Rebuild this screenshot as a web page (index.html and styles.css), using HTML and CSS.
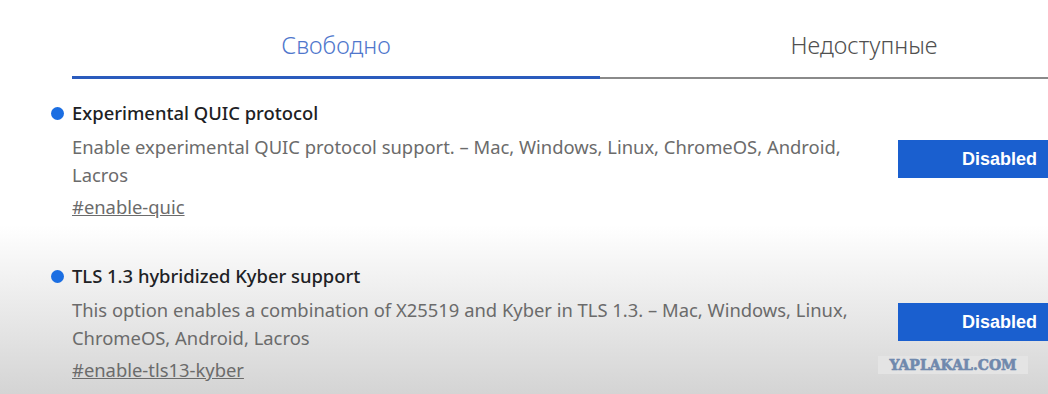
FILE: index.html
```html
<!DOCTYPE html>
<html lang="en">

<head>
    <meta charset="UTF-8">
    <meta name="viewport" content="width=device-width, initial-scale=1.0">
    <title>flags</title>
    <link rel="stylesheet" href="styles.css">
</head>

<body>
    <div class="page">
        <div class="tabs">
            <div class="tab active">Свободно</div>
            <div class="tab">Недоступные</div>
        </div>
        <div class="list">
            <div class="item">
                <span class="dot"></span>
                <div class="info">
                    <div class="title">Experimental QUIC protocol</div>
                    <div class="desc">Enable experimental QUIC protocol support. – Mac, Windows, Linux, ChromeOS, Android, Lacros</div>
                    <a class="link" href="#">#enable-quic</a>
                </div>
                <button class="sel">Disabled</button>
            </div>
            <div class="item">
                <span class="dot"></span>
                <div class="info">
                    <div class="title">TLS 1.3 hybridized Kyber support</div>
                    <div class="desc">This option enables a combination of X25519 and Kyber in TLS 1.3. – Mac, Windows, Linux, ChromeOS, Android, Lacros</div>
                    <a class="link" href="#">#enable-tls13-kyber</a>
                </div>
                <button class="sel">Disabled</button>
            </div>
        </div>
    </div>
    <div class="mark">YAPLAKAL.COM</div>
</body>

</html>
```

FILE: styles.css
```css
*{
    margin: 0;
    padding: 0;
    box-sizing: border-box;
}
html, body{
    height: 100%;
    overflow: hidden;
}
body{
    position: relative;
    font-family: "Noto Sans", "Open Sans", sans-serif;
    background: linear-gradient(to bottom, #ffffff 0px, #ffffff 225px, #d4d4d4 394px);
}
.page{
    width: 1048px;
    padding-left: 51px;
    overflow: hidden;
}
.tabs{
    display: flex;
    margin-left: 21px;
}
.tab{
    width: 528px;
    flex-shrink: 0;
    text-align: center;
    font-size: 23.5px;
    font-weight: 300;
    line-height: 30px;
    padding-top: 30px;
    height: 79px;
    color: #505050;
    border-bottom: 2px solid #8a8a8a;
}
.tab.active{
    color: #5077cc;
    border-bottom: 3px solid #2a5bbd;
}
.list{
    padding-top: 20px;
}
.item{
    display: flex;
    align-items: flex-start;
    margin-bottom: 41px;
}
.item:last-child{
    margin-bottom: 0;
}
.dot{
    width: 13px;
    height: 13px;
    border-radius: 50%;
    background-color: #1b6ee2;
    margin-top: 8px;
    margin-right: 8px;
    flex-shrink: 0;
}
.info{
    width: 800px;
    flex-shrink: 0;
    font-size: 18.4px;
}
.title{
    font-weight: 500;
    line-height: 28px;
    color: #202124;
}
.desc{
    margin-top: 6px;
    line-height: 28px;
    color: #6b6b6b;
}
.link{
    display: inline-block;
    margin-top: 4px;
    line-height: 28px;
    color: #6b6b6b;
}
.sel{
    margin-top: 41px;
    margin-left: 26px;
    width: 170px;
    height: 38px;
    border: none;
    background-color: #1a5fcf;
    color: #ffffff;
    font-family: "Liberation Sans", Arial, sans-serif;
    font-weight: bold;
    font-size: 18px;
    text-align: left;
    padding-left: 64px;
    flex-shrink: 0;
}
.mark{
    position: absolute;
    left: 878px;
    top: 356px;
    width: 150px;
    height: 18px;
    background-color: #e4e4e4;
    color: #7089ad;
    font-family: "DejaVu Serif", serif;
    font-weight: bold;
    font-size: 14px;
    line-height: 18px;
    text-align: center;
    -webkit-text-stroke: 0.6px #7089ad;
}
```
